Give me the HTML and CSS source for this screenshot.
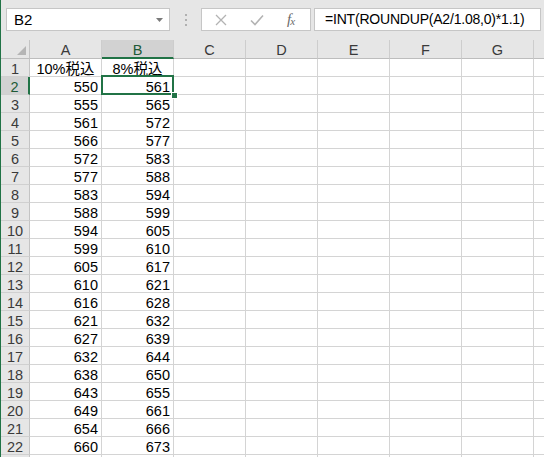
FILE: index.html
```html
<!DOCTYPE html>
<html lang="ja">
<head>
<meta charset="utf-8">
<title>Excel</title>
<link rel="stylesheet" href="styles.css">
</head>
<body>
<div class="app">
  <div class="toolbar">
    <div class="namebox">
      <span class="name">B2</span>
      <svg class="dd" width="7" height="4" viewBox="0 0 7 4"><path d="M0 0H7L3.5 4Z" fill="#7a7a7a"/></svg>
    </div>
    <div class="grip"><i></i><i></i><i></i></div>
    <div class="buttons">
      <svg class="btn" width="12" height="12" viewBox="0 0 12 12"><path d="M1 1L11 11M11 1L1 11" stroke="#b3b3b3" stroke-width="1.3" fill="none"/></svg>
      <svg class="btn" width="14" height="12" viewBox="0 0 14 12"><path d="M1 6.5L5 10.5L13 1.5" stroke="#b3b3b3" stroke-width="1.6" fill="none"/></svg>
      <span class="fx">f<sub>x</sub></span>
    </div>
    <div class="formula">=INT(ROUNDUP(A2/1.08,0)*1.1)</div>
  </div>
  <div class="sheet">
    <div class="row head">
      <div class="c rh corner"><span class="tri"></span></div>
      <div class="c ch">A</div><div class="c ch sel">B</div><div class="c ch">C</div><div class="c ch">D</div><div class="c ch">E</div><div class="c ch">F</div><div class="c ch">G</div><div class="c ch"></div>
    </div>
    <div class="row"><div class="c rh">1</div><div class="c t">10%税込</div><div class="c t">8%税込</div><div class="c"></div><div class="c"></div><div class="c"></div><div class="c"></div><div class="c"></div><div class="c"></div></div>
    <div class="row"><div class="c rh selr">2</div><div class="c n">550</div><div class="c n active">561<span class="selbox"></span><span class="handle"></span></div><div class="c"></div><div class="c"></div><div class="c"></div><div class="c"></div><div class="c"></div><div class="c"></div></div>
    <div class="row"><div class="c rh">3</div><div class="c n">555</div><div class="c n">565</div><div class="c"></div><div class="c"></div><div class="c"></div><div class="c"></div><div class="c"></div><div class="c"></div></div>
    <div class="row"><div class="c rh">4</div><div class="c n">561</div><div class="c n">572</div><div class="c"></div><div class="c"></div><div class="c"></div><div class="c"></div><div class="c"></div><div class="c"></div></div>
    <div class="row"><div class="c rh">5</div><div class="c n">566</div><div class="c n">577</div><div class="c"></div><div class="c"></div><div class="c"></div><div class="c"></div><div class="c"></div><div class="c"></div></div>
    <div class="row"><div class="c rh">6</div><div class="c n">572</div><div class="c n">583</div><div class="c"></div><div class="c"></div><div class="c"></div><div class="c"></div><div class="c"></div><div class="c"></div></div>
    <div class="row"><div class="c rh">7</div><div class="c n">577</div><div class="c n">588</div><div class="c"></div><div class="c"></div><div class="c"></div><div class="c"></div><div class="c"></div><div class="c"></div></div>
    <div class="row"><div class="c rh">8</div><div class="c n">583</div><div class="c n">594</div><div class="c"></div><div class="c"></div><div class="c"></div><div class="c"></div><div class="c"></div><div class="c"></div></div>
    <div class="row"><div class="c rh">9</div><div class="c n">588</div><div class="c n">599</div><div class="c"></div><div class="c"></div><div class="c"></div><div class="c"></div><div class="c"></div><div class="c"></div></div>
    <div class="row"><div class="c rh">10</div><div class="c n">594</div><div class="c n">605</div><div class="c"></div><div class="c"></div><div class="c"></div><div class="c"></div><div class="c"></div><div class="c"></div></div>
    <div class="row"><div class="c rh">11</div><div class="c n">599</div><div class="c n">610</div><div class="c"></div><div class="c"></div><div class="c"></div><div class="c"></div><div class="c"></div><div class="c"></div></div>
    <div class="row"><div class="c rh">12</div><div class="c n">605</div><div class="c n">617</div><div class="c"></div><div class="c"></div><div class="c"></div><div class="c"></div><div class="c"></div><div class="c"></div></div>
    <div class="row"><div class="c rh">13</div><div class="c n">610</div><div class="c n">621</div><div class="c"></div><div class="c"></div><div class="c"></div><div class="c"></div><div class="c"></div><div class="c"></div></div>
    <div class="row"><div class="c rh">14</div><div class="c n">616</div><div class="c n">628</div><div class="c"></div><div class="c"></div><div class="c"></div><div class="c"></div><div class="c"></div><div class="c"></div></div>
    <div class="row"><div class="c rh">15</div><div class="c n">621</div><div class="c n">632</div><div class="c"></div><div class="c"></div><div class="c"></div><div class="c"></div><div class="c"></div><div class="c"></div></div>
    <div class="row"><div class="c rh">16</div><div class="c n">627</div><div class="c n">639</div><div class="c"></div><div class="c"></div><div class="c"></div><div class="c"></div><div class="c"></div><div class="c"></div></div>
    <div class="row"><div class="c rh">17</div><div class="c n">632</div><div class="c n">644</div><div class="c"></div><div class="c"></div><div class="c"></div><div class="c"></div><div class="c"></div><div class="c"></div></div>
    <div class="row"><div class="c rh">18</div><div class="c n">638</div><div class="c n">650</div><div class="c"></div><div class="c"></div><div class="c"></div><div class="c"></div><div class="c"></div><div class="c"></div></div>
    <div class="row"><div class="c rh">19</div><div class="c n">643</div><div class="c n">655</div><div class="c"></div><div class="c"></div><div class="c"></div><div class="c"></div><div class="c"></div><div class="c"></div></div>
    <div class="row"><div class="c rh">20</div><div class="c n">649</div><div class="c n">661</div><div class="c"></div><div class="c"></div><div class="c"></div><div class="c"></div><div class="c"></div><div class="c"></div></div>
    <div class="row"><div class="c rh">21</div><div class="c n">654</div><div class="c n">666</div><div class="c"></div><div class="c"></div><div class="c"></div><div class="c"></div><div class="c"></div><div class="c"></div></div>
    <div class="row"><div class="c rh">22</div><div class="c n">660</div><div class="c n">673</div><div class="c"></div><div class="c"></div><div class="c"></div><div class="c"></div><div class="c"></div><div class="c"></div></div>
    <div class="row"><div class="c rh"></div><div class="c"></div><div class="c"></div><div class="c"></div><div class="c"></div><div class="c"></div><div class="c"></div><div class="c"></div><div class="c"></div></div>
  </div>
</div>
</body>
</html>
```
FILE: styles.css
```css
html, body {
  margin: 0;
  padding: 0;
  width: 544px;
  height: 457px;
  overflow: hidden;
  background: #ffffff;
}
.app {
  width: 544px;
  height: 457px;
  overflow: hidden;
  border-left: 1px solid #217346;
  box-sizing: border-box;
  font-family: "Liberation Sans", "Noto Sans CJK JP", sans-serif;
  color: #000;
}
.toolbar {
  height: 40px;
  background: #e6e6e6;
  display: flex;
  align-items: flex-start;
  padding-top: 8px;
  box-sizing: border-box;
}
.namebox {
  margin-left: 5px;
  width: 164px;
  height: 23px;
  box-sizing: border-box;
  background: #fff;
  border: 1px solid #c6c6c6;
  display: flex;
  align-items: center;
  justify-content: space-between;
  padding: 0 6px 0 7px;
  font-size: 15px;
}
.grip {
  width: 31px;
  height: 23px;
  display: flex;
  flex-direction: column;
  align-items: center;
  justify-content: center;
  gap: 3px;
}
.grip i {
  display: block;
  width: 2px;
  height: 2px;
  background: #b0b0b0;
}
.buttons {
  width: 110px;
  height: 23px;
  box-sizing: border-box;
  background: #fff;
  border: 1px solid #c6c6c6;
  display: flex;
  align-items: center;
  padding-left: 13px;
}
.btn:first-child { margin-right: 23px; }
.fx {
  margin-left: 23px;
  font-family: "Liberation Serif", serif;
  font-style: italic;
  font-size: 15px;
  color: #6a6a6a;
  letter-spacing: -1px;
}
.fx sub {
  font-size: 11px;
  vertical-align: -1px;
}
.formula {
  margin-left: 3px;
  width: 227px;
  height: 23px;
  box-sizing: border-box;
  background: #fff;
  border: 1px solid #c6c6c6;
  font-size: 14px;
  line-height: 21px;
  padding-left: 10px;
  white-space: nowrap;
  overflow: hidden;
  letter-spacing: -0.2px;
}
.sheet {
  width: 620px;
}
.row {
  display: grid;
  grid-template-columns: 29px repeat(8, 72px);
  height: 18px;
}
.row.head {
  height: 19px;
}
.c {
  box-sizing: border-box;
  border-right: 1px solid #d4d4d4;
  border-bottom: 1px solid #d4d4d4;
  font-size: 14.5px;
  line-height: 21px;
  height: 18px;
  padding: 0 4px;
  white-space: nowrap;
  position: relative;
}
.rh {
  background: #e6e6e6;
  border-right: 1px solid #c4c4c4;
  border-bottom: 1px solid #d0d0d0;
  color: #3a3a3a;
  text-align: center;
  padding: 0;
}
.ch {
  background: #e6e6e6;
  border-right: 1px solid #cdcdcd;
  border-bottom: 1px solid #bdbdbd;
  color: #3a3a3a;
  text-align: center;
  line-height: 21px;
  height: 19px;
}
.ch.sel {
  background: #d2d2d2;
  border-bottom: 2px solid #217346;
  color: #1e5a37;
}
.rh.selr {
  background: #d2d2d2;
  border-right: 2px solid #217346;
  color: #1e5a37;
}
.corner {
  height: 19px;
  border-bottom: 1px solid #bdbdbd;
}
.tri {
  position: absolute;
  right: 3px;
  bottom: 3px;
  width: 0;
  height: 0;
  border-left: 9px solid transparent;
  border-bottom: 9px solid #b5b5b5;
}
.t { text-align: center; }
.n { text-align: right; padding-right: 3px; }
.active { z-index: 5; }
.selbox {
  position: absolute;
  left: -1px;
  top: -2px;
  right: -1px;
  bottom: -1px;
  border: 2px solid #217346;
}
.handle {
  position: absolute;
  right: -5px;
  bottom: -5px;
  width: 7px;
  height: 7px;
  box-sizing: border-box;
  background: #217346;
  border: 1px solid #fff;
}
```
